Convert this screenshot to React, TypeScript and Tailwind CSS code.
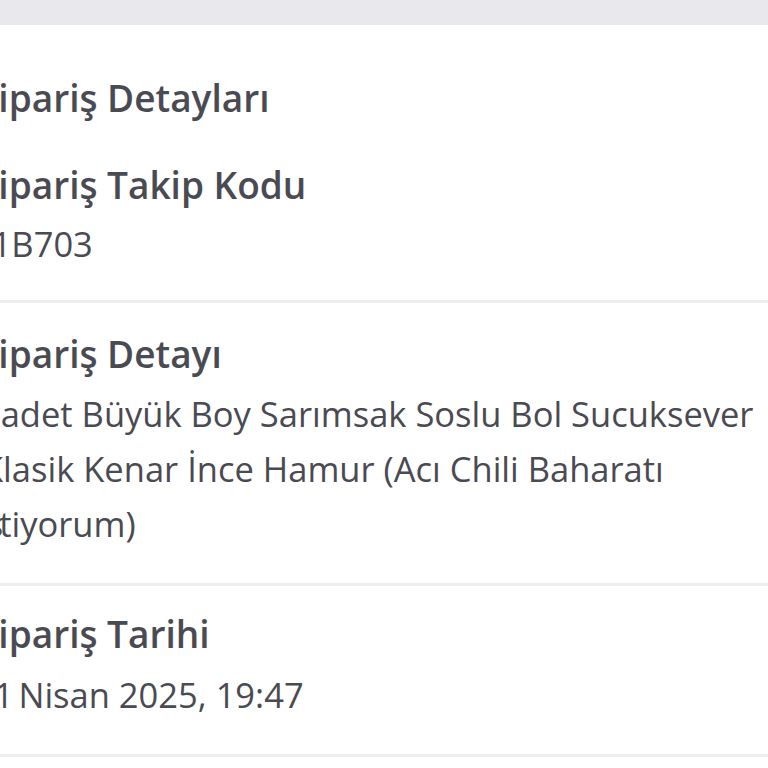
import React from "react";

const font = { fontFamily: "'Open Sans', 'Noto Sans', sans-serif" };

const H = ({ children, className = "" }: { children: React.ReactNode; className?: string }) => (
  <div className={`-ml-[4px] text-[37px] leading-[55px] font-semibold ${className}`}>{children}</div>
);

export default function App() {
  return (
    <div className="w-[768px] h-[768px] overflow-hidden bg-white" style={font}>
      <div className="h-[25px] bg-[#e8e8ed]" />
      <div className="-ml-[18px] text-[#4a4a52]">
        <div className="pt-[45px] pb-[29px] border-b-[3px] border-[#eeeeee]">
          <H>Sipariş Detayları</H>
          <H className="mt-[32px]">Sipariş Takip Kodu</H>
          <div className="mt-[4px] text-[34.5px] leading-[55px]">I1B703</div>
        </div>
        <div className="pt-[23px] pb-[32px] border-b-[3px] border-[#eeeeee]">
          <H>Sipariş Detayı</H>
          <div className="mt-[5px] text-[34.5px] leading-[55px]">
            <span className="tracking-[-10px]">1</span> adet Büyük Boy Sarımsak Soslu Bol Sucuksever
            <br />
            Klasik Kenar İnce Hamur (Acı Chili Baharatı
            <br />
            <span className="tracking-[-4px]">is</span>tiyorum)
          </div>
        </div>
        <div className="pt-[20px] pb-[32px] border-b-[3px] border-[#eeeeee]">
          <H>Sipariş Tarihi</H>
          <div className="mt-[6px] text-[34.5px] leading-[55px]">
            <span className="tracking-[-8px]">2</span>
            <span className="tracking-[-4px]">1</span> Nisan 2025, 19:47
          </div>
        </div>
      </div>
    </div>
  );
}
